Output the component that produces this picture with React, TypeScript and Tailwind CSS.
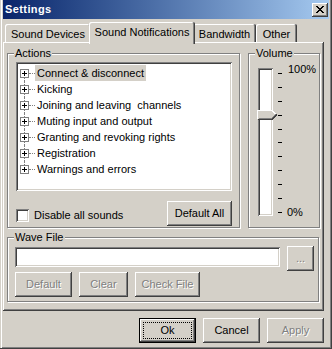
import type { ReactNode } from 'react'
import clsx from 'clsx'

const raised =
  'bg-[#d4d0c8] shadow-[inset_-1px_-1px_#404040,inset_1px_1px_#ffffff,inset_-2px_-2px_#808080]'
const sunken =
  'shadow-[inset_1px_1px_#808080,inset_-1px_-1px_#ffffff,inset_2px_2px_#404040,inset_-2px_-2px_#d4d0c8]'
const etched = 'border border-[#808080] shadow-[inset_1px_1px_#ffffff,1px_1px_#ffffff]'
const disabledText = 'text-[#808080] [text-shadow:1px_1px_0_#ffffff]'

const actions = [
  'Connect & disconnect',
  'Kicking',
  'Joining and leaving  channels',
  'Muting input and output',
  'Granting and revoking rights',
  'Registration',
  'Warnings and errors',
]

const Button = ({
  children,
  disabled,
  className,
}: {
  children: ReactNode
  disabled?: boolean
  className?: string
}) => (
  <button
    type="button"
    className={clsx(
      'flex h-[25px] items-center justify-center',
      raised,
      disabled ? disabledText : 'text-black',
      className,
    )}
  >
    {children}
  </button>
)

const GroupLabel = ({ children }: { children: ReactNode }) => (
  <span className="absolute left-[6px] top-[-7px] bg-[#d4d0c8] px-[1px] leading-[13px]">
    {children}
  </span>
)

const PlusBox = () => (
  <svg width="9" height="9" viewBox="0 0 9 9" shapeRendering="crispEdges" className="shrink-0">
    <rect x="0.5" y="0.5" width="8" height="8" fill="#ffffff" stroke="#808080" />
    <path d="M2 4.5H7M4.5 2V7" stroke="#000000" />
  </svg>
)

const TreeRow = ({ label, index }: { label: string; index: number }) => {
  const first = index === 0
  const last = index === actions.length - 1
  return (
    <div className="flex h-[16px] items-center">
      <div className="flex h-full w-[9px] flex-col items-center">
        <div
          className={clsx(
            'h-[4px] w-0 border-l border-dotted',
            first ? 'border-transparent' : 'border-[#808080]',
          )}
        />
        <PlusBox />
        <div
          className={clsx(
            'h-[3px] w-0 border-l border-dotted',
            last ? 'border-transparent' : 'border-[#808080]',
          )}
        />
      </div>
      <div className="w-[6px] border-t border-dotted border-[#808080]" />
      <span
        className={clsx(
          'whitespace-pre px-[2px] leading-[16px]',
          first && 'bg-[#d4d0c8]',
        )}
      >
        {label}
      </span>
    </div>
  )
}

const Thumb = () => (
  <svg
    width="21"
    height="10"
    viewBox="0 0 21 10"
    shapeRendering="crispEdges"
    className="absolute left-[-1px] top-[42px]"
  >
    <path d="M0 0H15L20 5L15 10H0Z" fill="#d4d0c8" />
    <path d="M0.5 9V0.5H15L19.5 5" fill="none" stroke="#ffffff" />
    <path d="M1 9.5H15L20 4.5" fill="none" stroke="#404040" />
    <path d="M1.5 8.5H14.5L18.5 4.5" fill="none" stroke="#808080" />
  </svg>
)

const Tab = ({ label, active, className }: { label: string; active?: boolean; className?: string }) => (
  <div
    className={clsx(
      'flex items-center justify-center rounded-t-[2px] bg-[#d4d0c8] shadow-[inset_-1px_0_#404040,inset_1px_1px_#ffffff,inset_-2px_0_#808080]',
      active ? 'relative z-10 -mx-[2px] mb-[-2px] h-[22px] pb-[2px]' : 'h-[18px] pt-[2px]',
      className,
    )}
  >
    {label}
  </div>
)

export default function App() {
  return (
    <div className="flex h-[349px] w-[332px] flex-col bg-[#d4d0c8] px-[3px] font-['Liberation_Sans',Arial,sans-serif] text-[11px] text-black shadow-[inset_-1px_-1px_#404040,inset_1px_0_#d4d0c8,inset_2px_0_#ffffff,inset_-2px_-2px_#808080]">
      <div className="flex h-[19px] w-full shrink-0 items-center justify-between bg-linear-to-r from-[#0a246a] to-[#a6caf0] pl-[2px] pr-[1px]">
        <span className="text-[11px] font-bold tracking-[0.4px] text-white">Settings</span>
        <button type="button" className={clsx('flex h-[14px] w-[16px] items-center justify-center', raised)}>
          <svg width="8" height="7" viewBox="0 0 8 7" shapeRendering="crispEdges">
            <path d="M0.5 0L7.5 7M7.5 0L0.5 7" stroke="#000000" strokeWidth="1.6" />
          </svg>
        </button>
      </div>

      <div className="mt-[3px] flex h-[20px] items-end pl-[2px]">
        <Tab label="Sound Devices" className="w-[86px]" />
        <Tab label="Sound Notifications" active className="w-[106px]" />
        <Tab label="Bandwidth" className="w-[63px]" />
        <Tab label="Other" className="w-[41px]" />
      </div>

      <div
        className={clsx(
          'h-[269px] w-[321px] shrink-0 bg-[#d4d0c8] pl-[4px] pt-[11px]',
          'shadow-[inset_-1px_-1px_#404040,inset_1px_1px_#ffffff,inset_-2px_-2px_#808080]',
        )}
      >
        <div className="flex items-start gap-[8px]">
          <div className={clsx('relative h-[175px] w-[233px] pl-[8px] pt-[8px]', etched)}>
            <GroupLabel>Actions</GroupLabel>
            <div className={clsx('h-[129px] w-[216px] bg-white pl-[4px] pt-[3px]', sunken)}>
              {actions.map((a, i) => (
                <TreeRow key={a} label={a} index={i} />
              ))}
            </div>
            <div className="mt-[10px] flex w-[216px] items-start justify-between">
              <label className="mt-[8px] flex items-center gap-[5px]">
                <span className={clsx('block h-[13px] w-[13px] bg-white', sunken)} />
                <span className="leading-[13px]">Disable all sounds</span>
              </label>
              <Button className="w-[65px]">Default All</Button>
            </div>
          </div>

          <div className={clsx('relative flex h-[175px] w-[72px] items-start pl-[9px] pt-[14px]', etched)}>
            <GroupLabel>Volume</GroupLabel>
            <div className={clsx('relative h-[148px] w-[15px] shrink-0 bg-white', sunken)}>
              <Thumb />
            </div>
            <div className="ml-[5px] mt-[5px] flex h-[140px] flex-col justify-between">
              {Array.from({ length: 11 }, (_, i) => (
                <div key={i} className="h-px w-[4px] bg-black" />
              ))}
            </div>
            <div className="ml-[6px] mt-[-5px] flex h-[156px] flex-col justify-between leading-[13px]">
              <span>100%</span>
              <span className="-ml-[1px]">0%</span>
            </div>
          </div>
        </div>

        <div className={clsx('relative mt-[9px] h-[65px] w-[312px] pl-[7px] pt-[8px]', etched)}>
          <GroupLabel>Wave File</GroupLabel>
          <div className="flex items-start gap-[7px]">
            <div className={clsx('mt-[1px] h-[20px] w-[265px] bg-white', sunken)} />
            <Button disabled className="w-[27px]">
              ...
            </Button>
          </div>
          <div className="mt-[1px] flex gap-[7px]">
            <Button disabled className="w-[57px]">
              Default
            </Button>
            <Button disabled className="w-[49px]">
              Clear
            </Button>
            <Button disabled className="w-[65px]">
              Check File
            </Button>
          </div>
        </div>
      </div>

      <div className="mt-[7px] flex w-[321px] justify-end gap-[7px]">
        <button
          type="button"
          className="h-[25px] w-[57px] border border-black bg-[#d4d0c8] p-[3px] shadow-[inset_-1px_-1px_#404040,inset_1px_1px_#ffffff,inset_-2px_-2px_#808080]"
        >
          <span className="flex h-full w-full items-center justify-center border border-dotted border-black">
            Ok
          </span>
        </button>
        <Button className="w-[57px]">Cancel</Button>
        <Button disabled className="w-[57px]">
          Apply
        </Button>
      </div>
    </div>
  )
}
